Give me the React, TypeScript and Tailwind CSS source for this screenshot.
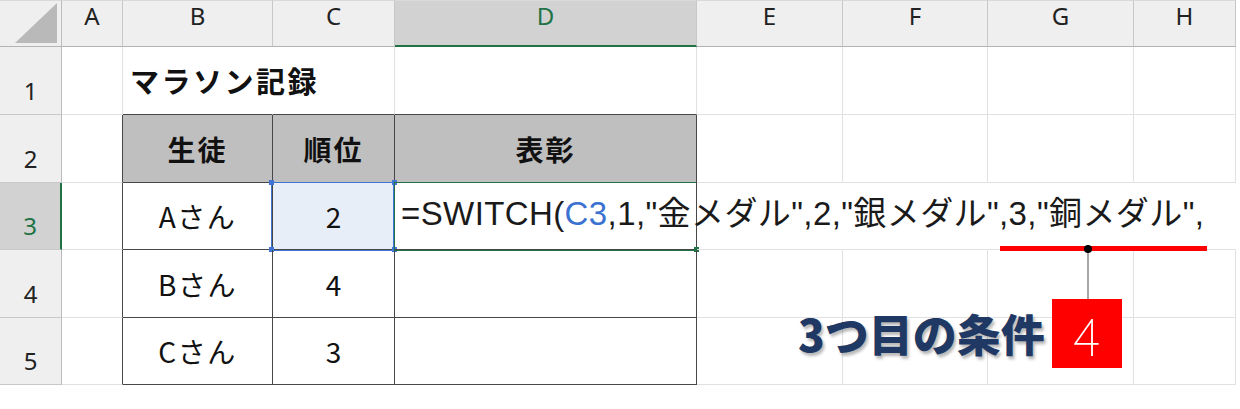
import React from 'react'

const COLS = ['A', 'B', 'C', 'D', 'E', 'F', 'G', 'H']
const ROWS = [1, 2, 3, 4, 5]

const jp = { fontFamily: '"Noto Sans CJK JP", "Noto Sans", sans-serif' }

// 表の罫線(B2:D5)にかかるかどうか
const inTable = (r: number, c: number) => r >= 2 && r <= 5 && c >= 1 && c <= 3

function cellClass(r: number, c: number) {
  const cls = ['relative flex items-center border-r border-b text-[28px] text-[#111]']
  // 右罫線 (はみ出した文字の下は線なし)
  if (inTable(r, c) || (c === 0 && r >= 2)) cls.push('border-r-[#474747]')
  else if ((r === 3 && c >= 3) || (r === 1 && c === 1)) cls.push('border-r-transparent')
  else cls.push('border-r-[#e1e1e1]')
  // 下罫線
  if (inTable(r, c) || (r === 1 && c >= 1 && c <= 3)) cls.push('border-b-[#474747]')
  else cls.push('border-b-[#e1e1e1]')
  if (r === 2 && c >= 1 && c <= 3) cls.push('bg-[#bfbfbf] justify-center font-bold')
  else if (r > 1 && (c === 1 || c === 2)) cls.push('justify-center')
  return cls.join(' ')
}

function Formula() {
  return (
    <span
      className="relative z-10 whitespace-nowrap pl-[6px] pb-[4px] text-[33px] tracking-[0.4px] text-[#1a1a1a]"
      style={{ fontFamily: '"Liberation Sans", "Noto Sans CJK JP", sans-serif' }}>
      =SWITCH(<span className="text-[#3b72d2]">C3</span>,1,"金メダル",2,"銀メダル",3,"銅メダル",
    </span>
  )
}

const content: Record<string, React.ReactNode> = {
  '1-1': <span className="relative z-10 whitespace-nowrap pl-[7px] text-[29px] font-bold tracking-[2.5px]">マラソン記録</span>,
  '2-1': <span className="tracking-[2px]">生徒</span>,
  '2-2': <span className="tracking-[2px]">順位</span>,
  '2-3': <span className="tracking-[2px]">表彰</span>,
  '3-1': <span className="tracking-[1.5px]">Aさん</span>,
  '3-2': <span>2</span>,
  '4-1': <span className="tracking-[1.5px]">Bさん</span>,
  '4-2': <span>4</span>,
  '5-1': <span className="tracking-[1.5px]">Cさん</span>,
  '5-2': <span>3</span>,
}

export default function App() {
  return (
    <div className="relative w-[1240px] h-[409px] bg-white overflow-hidden" style={jp}>
      <div
        className="grid w-[1236px] grid-cols-[62px_61px_150px_122px_302px_146px_145px_146px_102px] grid-rows-[47px_68px_68px_67px_68px_67px]">

        {/* 左上の角 */}
        <div className="flex items-end justify-end border-t border-r border-b border-t-[#d9d9d9] border-r-[#bcbcbc] border-b-[#b3b3b3] bg-[#efefef] pr-[4px] pb-[3px]">
          <svg width="42" height="40" viewBox="0 0 42 40">
            <polygon points="0,40 42,0 42,40" fill="#b9b9b9" />
          </svg>
        </div>

        {/* 列見出し */}
        {COLS.map((col) => (
          <div
            key={col}
            className={
              col === 'D'
                ? 'flex justify-center border-t border-r border-b-2 border-t-[#d9d9d9] border-r-[#c8c8c8] border-b-[#217346] bg-[#d2d2d2] text-[24px] leading-[30px] text-[#217346]'
                : 'flex justify-center border-t border-r border-b border-t-[#d9d9d9] border-r-[#c8c8c8] border-b-[#b3b3b3] bg-[#efefef] text-[24px] leading-[30px] text-[#222]'
            }
            style={{ fontFamily: '"Noto Sans", sans-serif' }}>
            {col}
          </div>
        ))}

        {ROWS.map((r) => (
          <React.Fragment key={r}>
            {/* 行見出し */}
            <div
              className={
                r === 3
                  ? 'flex items-end justify-center border-r-2 border-b border-r-[#217346] border-b-[#c8c8c8] bg-[#d2d2d2] pb-[5px] text-[24px] text-[#217346]'
                  : 'flex items-end justify-center border-r border-b border-r-[#bcbcbc] border-b-[#c8c8c8] bg-[#efefef] pb-[5px] text-[24px] text-[#222]'
              }
              style={{ fontFamily: '"Noto Sans", sans-serif' }}>
              {r}
            </div>

            {COLS.map((col, i) => {
              const c = i
              const key = `${r}-${c}`
              if (r === 3 && c === 2) {
                return (
                  <div key={key} className={cellClass(r, c) + ' bg-[#e8eef8]'}>
                    {content[key]}
                    {/* 参照セルの青枠 */}
                    <div className="pointer-events-none absolute -left-[2px] -top-[1px] h-[69px] w-[123px] border-[1.5px] border-[#3f74d4]" />
                    <div className="absolute -left-[4px] -top-[3px] h-[5px] w-[5px] bg-[#3f74d4]" />
                    <div className="absolute -right-[3px] -top-[3px] h-[5px] w-[5px] bg-[#3f74d4]" />
                    <div className="absolute -left-[4px] -bottom-[3px] h-[5px] w-[5px] bg-[#3f74d4]" />
                    <div className="absolute -right-[3px] -bottom-[3px] h-[5px] w-[5px] bg-[#3f74d4]" />
                  </div>
                )
              }
              if (r === 3 && c === 3) {
                return (
                  <div key={key} className={cellClass(r, c)}>
                    <Formula />
                    {/* アクティブセルの緑枠 */}
                    <div className="pointer-events-none absolute -left-[1px] -top-[1.5px] h-[69px] w-[302px] border-[1.5px] border-r-0 border-[#217346]" />
                    <div className="absolute -right-[3px] -bottom-[3px] h-[5px] w-[5px] bg-[#217346]" />
                  </div>
                )
              }
              return (
                <div key={key} className={cellClass(r, c)}>
                  {content[key]}
                </div>
              )
            })}
          </React.Fragment>
        ))}
      </div>

      {/* 注釈: 赤線・点・引き出し線 */}
      <div className="absolute left-[1000px] top-[246px] h-[5px] w-[207px] bg-[#ff0000]" />
      <div className="absolute left-[1087px] top-[251px] h-[48px] w-[1.5px] bg-[#a6a6a6]" />
      <div className="absolute left-[1084px] top-[245px] h-[8px] w-[8px] rounded-full bg-black" />

      {/* 注釈ラベル */}
      <div className="absolute left-[798px] top-[299px] flex items-center gap-[7px]">
        <span
          className="text-[44px] font-black leading-[69px] text-[#203864]"
          style={{ textShadow: '2px 3px 3px rgba(0,0,0,0.28)' }}>
          3つ目の条件
        </span>
        <span className="flex h-[69px] w-[70px] items-center justify-center bg-[#ff0000] text-[52px] font-thin text-white">
          4
        </span>
      </div>
    </div>
  )
}
